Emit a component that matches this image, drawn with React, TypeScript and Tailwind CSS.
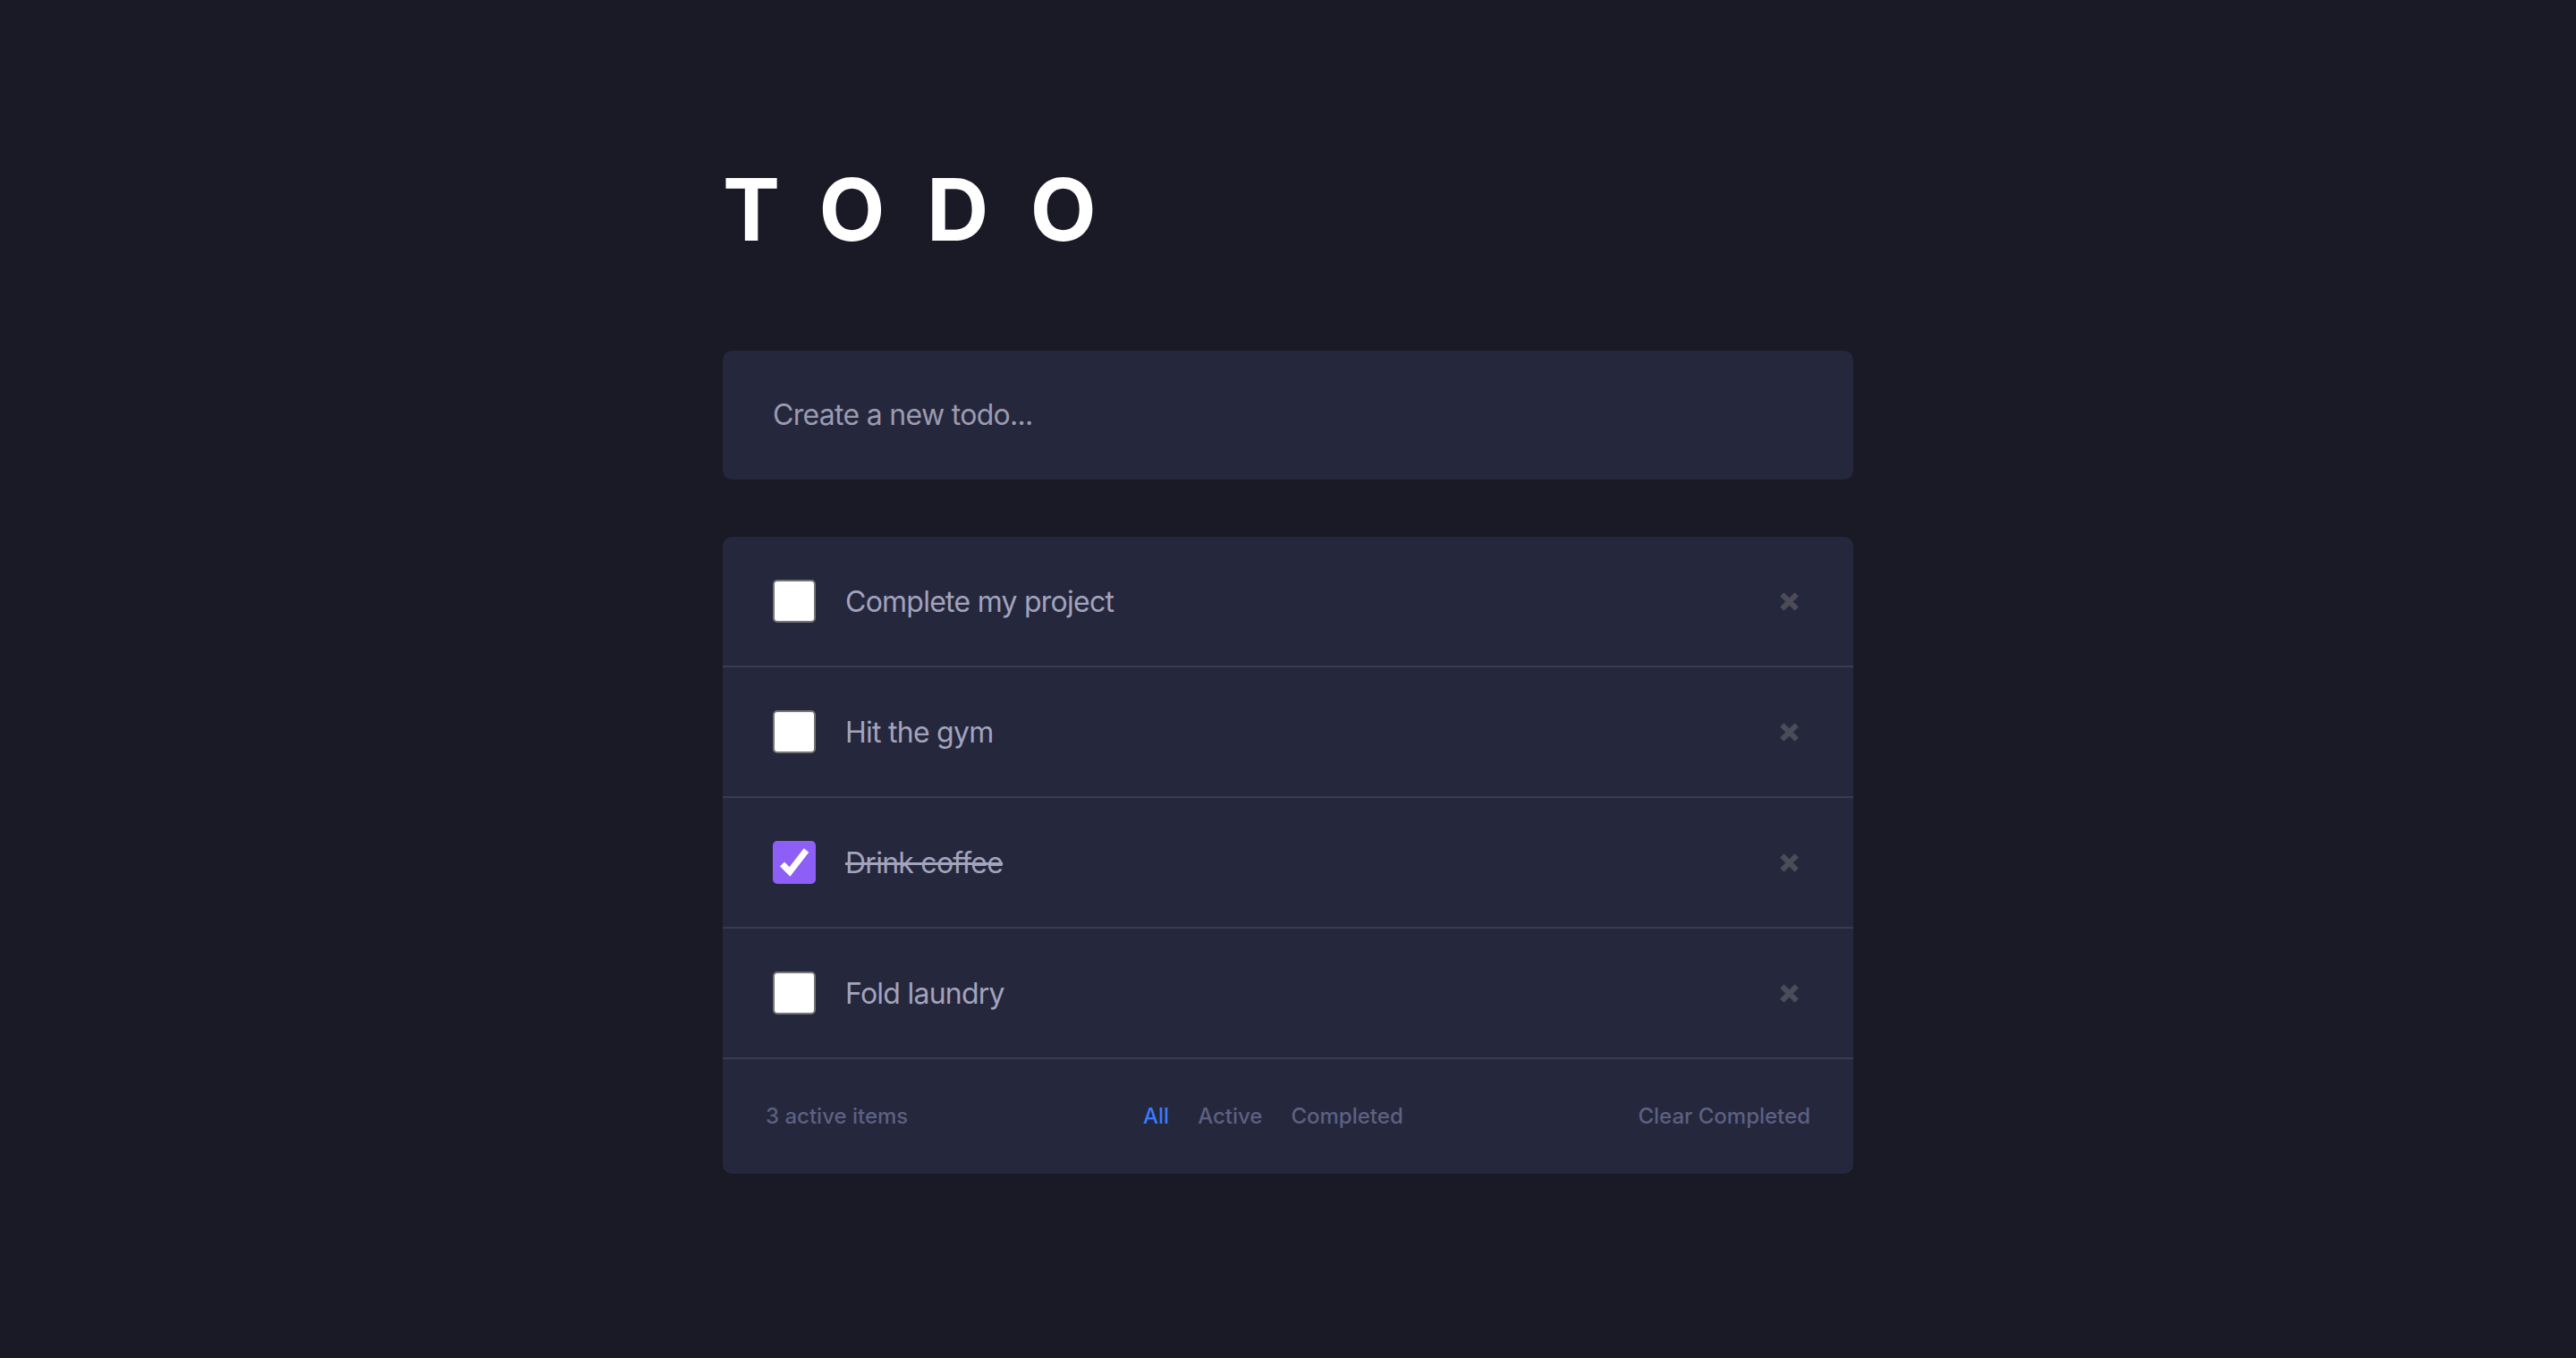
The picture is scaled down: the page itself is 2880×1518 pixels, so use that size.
import React from "react";

type Todo = { text: string; done: boolean };

const todos: Todo[] = [
  { text: "Complete my project", done: false },
  { text: "Hit the gym", done: false },
  { text: "Drink coffee", done: true },
  { text: "Fold laundry", done: false },
];

function Box({ done }: { done: boolean }) {
  if (done) {
    return (
      <div className="w-12 h-12 shrink-0 rounded-[5px] bg-[#8d5ff6] flex items-center justify-center">
        <svg width="48" height="48" viewBox="0 0 48 48">
          <polyline
            points="10.5,26 19,34.5 37.5,10.5"
            fill="none"
            stroke="#ffffff"
            strokeWidth="7"
            strokeLinecap="butt"
            strokeLinejoin="miter"
          />
        </svg>
      </div>
    );
  }
  return (
    <div className="w-12 h-12 shrink-0 rounded-[5px] bg-white border-2 border-[#767676]" />
  );
}

function XIcon() {
  return (
    <svg width="21" height="21" viewBox="0 0 21 21">
      <line x1="2.3" y1="2.3" x2="18.7" y2="18.7" stroke="#4b4c58" strokeWidth="6" />
      <line x1="18.7" y1="2.3" x2="2.3" y2="18.7" stroke="#4b4c58" strokeWidth="6" />
    </svg>
  );
}

export default function App() {
  return (
    <div className="min-h-[1518px] bg-[#191a25] font-['Inter',sans-serif]">
      <div className="mx-auto w-[1264px] pt-[186px]">
        <h1 className="text-[96px] leading-none font-bold text-white tracking-[46.5px] m-0">
          TODO
        </h1>
        <div className="mt-[110px] h-[144px] rounded-[10px] bg-[#25273c] flex items-center pl-[56px]">
          <span className="text-[32px] tracking-[-0.7px] text-[#9a9bb0]">Create a new todo...</span>
        </div>
        <div className="mt-[64px] rounded-[10px] bg-[#25273c] overflow-hidden">
          {todos.map((t) => (
            <div
              key={t.text}
              className="h-[146px] border-b-2 border-[#393b50] flex items-center pl-[56px] pr-[61px]"
            >
              <Box done={t.done} />
              <span
                className={
                  "ml-[33px] flex-1 text-[32px] tracking-[-0.75px] pt-[2px] text-[#a2a3bd]" +
                  (t.done ? " line-through" : "")
                }
              >
                {t.text}
              </span>
              <XIcon />
            </div>
          ))}
          <div className="h-[128px] flex items-center justify-between px-[48px] text-[24px] font-medium text-[#5d6082]">
            <span>3 active items</span>
            <div className="flex items-center gap-8">
              <span className="text-[#3a7bfd]">All</span>
              <span>Active</span>
              <span>Completed</span>
            </div>
            <span>Clear Completed</span>
          </div>
        </div>
      </div>
    </div>
  );
}
